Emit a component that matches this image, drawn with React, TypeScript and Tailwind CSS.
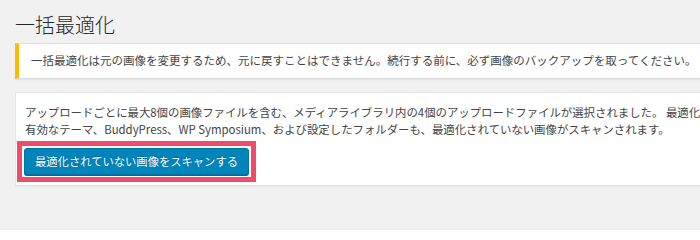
const App = () => {
  return (
    <div className="w-[700px] h-[230px] overflow-hidden bg-[#f1f1f1] text-[#444] font-['Noto_Sans_CJK_JP','Noto_Sans',sans-serif]">
      <div className="w-[760px] pl-[15px]">
        <h1 className="pt-[12px] text-[20px] leading-[26px] font-light text-[#23282d]">
          一括最適化
        </h1>

        <div className="mt-[5px] h-[36px] flex items-center bg-white border border-[#dcdcde] border-l-[4px] border-l-[#ffb900] pl-[12px] text-[11.5px] whitespace-nowrap shadow-[0_1px_1px_rgba(0,0,0,0.06)]">
          一括最適化は元の画像を変更するため、元に戻すことはできません。続行する前に、必ず画像のバックアップを取ってください。
        </div>

        <div className="mt-[13px] bg-white border border-[#e5e5e5] pl-[9px] pt-[11px] pb-[3px] shadow-[0_1px_1px_rgba(0,0,0,0.04)]">
          <p className="text-[11.4px] leading-[17px] whitespace-nowrap">
            アップロードごとに最大8個の画像ファイルを含む、メディアライブラリ内の4個のアップロードファイルが選択されました。 最適化を
            <br />
            有効なテーマ、BuddyPress、WP Symposium、および設定したフォルダーも、最適化されていない画像がスキャンされます。
          </p>
          <div className="mt-[3px] -ml-[8px] w-fit border-[5px] border-[#ef4b6d] p-[2px]">
            <button className="block h-[27px] px-[10px] bg-[#0085ba] border border-[#0073aa] rounded-[3px] text-white text-[11.3px] leading-none shadow-[0_1px_0_#006799] [text-shadow:0_-1px_1px_#006799]">
              最適化されていない画像をスキャンする
            </button>
          </div>
        </div>
      </div>
    </div>
  )
}

export default App
